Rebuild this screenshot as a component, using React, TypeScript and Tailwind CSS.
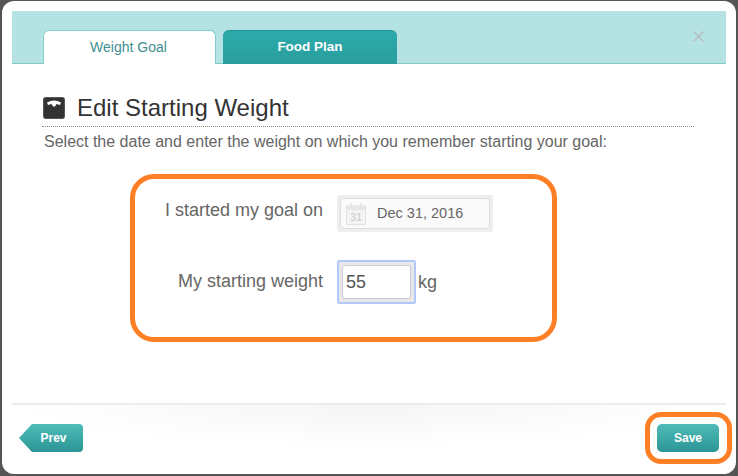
import React from 'react';

const ScaleIcon = () => (
	<svg width="22" height="22" viewBox="0 0 22 22" className="shrink-0">
		<rect x="0.5" y="0.5" width="21" height="21" rx="2" fill="#333333" stroke="#555555" />
		<path d="M4 5.5 Q11 1.5 18 5.5 L17 8 L13.5 7 L12 9.5 L10 9.5 L8.5 7 L5 8 Z" fill="#ffffff" />
	</svg>
);

const CalendarIcon = () => (
	<svg width="20" height="22" viewBox="0 0 20 22" className="shrink-0">
		<rect x="0.5" y="3" width="19" height="18.5" fill="#f4f4f4" stroke="#e2e2e2" />
		<rect x="0.5" y="3" width="19" height="4" fill="#e6e6e6" />
		<rect x="4" y="0.5" width="2" height="4" fill="#e2e2e2" />
		<rect x="14" y="0.5" width="2" height="4" fill="#e2e2e2" />
		<text x="10" y="18" textAnchor="middle" fontSize="11" fontWeight="700" fill="#d4d4d4" fontFamily="Liberation Sans, sans-serif">31</text>
	</svg>
);

const App: React.FC = () => (
	<div className="relative h-[476px] w-[738px] overflow-hidden bg-[#555555] pl-[2px] pt-[1px] font-['Liberation_Sans',Arial,sans-serif]">
		<div className="flex h-[473px] w-[734px] flex-col rounded-[12px] bg-white px-[10px] pt-[10px]">
			{/* tabs */}
			<div className="relative flex h-[53px] shrink-0 items-end gap-[7px] border-b border-[#7fcbcb] bg-[#b5e3e3] pl-[31px]">
				<div className="-mb-px flex h-[34px] w-[173px] items-center justify-center rounded-t-[6px] border border-b-0 border-[#7fcfcf] bg-white pr-[2px] text-[14px] text-[#3f8f90]">
					Weight Goal
				</div>
				<div className="-mb-px flex h-[34px] w-[174px] items-center justify-center rounded-t-[6px] border-t border-[#1f9393] bg-gradient-to-b from-[#2caaaa] to-[#2a9e9e] text-[13.5px] font-bold text-white">
					Food Plan
				</div>
				<svg width="11" height="11" viewBox="0 0 11 11" className="absolute right-[22px] top-[20px]">
					<path d="M0.5 0.5 L10.5 10.5 M10.5 0.5 L0.5 10.5" stroke="#b9b9bd" strokeWidth="1.2" />
				</svg>
			</div>

			{/* body */}
			<div className="h-[339px] shrink-0 px-[30px] pt-[33px]">
				<div className="mr-[2px] flex h-[30px] items-center gap-[12px] border-b border-dotted border-[#888888] pb-[7px] pl-[1px]">
					<ScaleIcon />
					<h2 className="text-[24px] leading-none text-[#333333]">Edit Starting Weight</h2>
				</div>
				<p className="mt-[6px] pl-[2px] text-[16px] leading-[18px] text-[#666666]">
					Select the date and enter the weight on which you remember starting your goal:
				</p>
				<div className="mt-[44px] flex flex-col gap-[28px]">
					<div className="flex items-center">
						<span className="-mt-[8px] w-[281px] text-right text-[18px] leading-[20px] text-[#666666]">I started my goal on</span>
						<div className="ml-[14px] h-[37px] w-[156px] rounded-[3px] bg-[#eeeeee] p-[3px]">
							<div className="flex h-full items-center gap-[11px] rounded-[4px] border border-[#dddddd] bg-[#fafafa] pl-[5px] text-[14.5px] text-[#666666]">
								<CalendarIcon />
								<span>Dec 31, 2016</span>
							</div>
						</div>
					</div>
					<div className="flex items-center">
						<span className="-mt-[2px] w-[281px] text-right text-[18px] leading-[20px] text-[#666666]">My starting weight</span>
						<div className="ml-[14px] h-[44px] w-[79px] rounded-[2px] border-2 border-[#b0c9fa] bg-[#e8e8e8] p-[3px]">
							<div className="flex h-full items-center rounded-[3px] border border-[#cccccc] bg-white pl-[3px] text-[18px] text-[#555555]">
								55
							</div>
						</div>
						<span className="ml-[2px] text-[18px] text-[#666666]">kg</span>
					</div>
				</div>
			</div>

			{/* footer */}
			<div className="flex flex-1 items-start justify-between border-t-2 border-[#ececec] bg-[radial-gradient(ellipse_50%_60%_at_50%_0%,#f5f5f5,#ffffff)] pl-[7px] pr-[7px] pt-[19px]">
				<button className="flex h-[28px] w-[64px] items-center justify-center rounded-r-[4px] bg-gradient-to-b from-[#4fbdb9] to-[#2a9595] pl-[5px] text-[12px] font-bold text-white [clip-path:polygon(0_50%,13px_0,100%_0,100%_100%,13px_100%)]">
					Prev
				</button>
				<button className="h-[28px] w-[62px] rounded-[5px] bg-gradient-to-b from-[#4fbdb9] to-[#2a9595] text-[12px] font-bold text-white">
					Save
				</button>
			</div>
		</div>

		{/* annotations drawn over the screenshot */}
		<div className="absolute left-[130px] top-[174px] h-[168px] w-[427px] rounded-[24px] border-[5px] border-[#ff7f27]" />
		<div className="absolute left-[645px] top-[412px] h-[52px] w-[87px] rounded-[16px] border-[5px] border-[#ff7f27]" />
	</div>
);

export default App;
